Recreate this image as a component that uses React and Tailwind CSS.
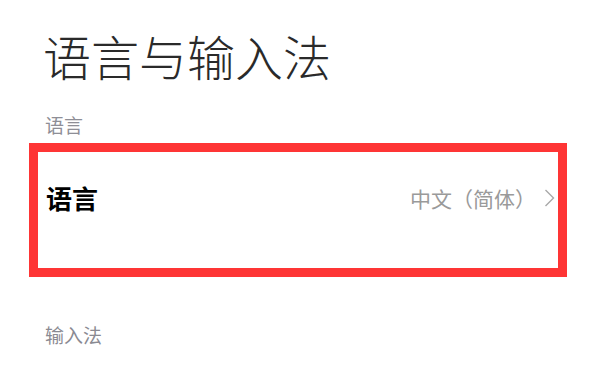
import React from "react";

const App = () => {
  return (
    <div className="w-[600px] h-[392px] bg-white overflow-hidden font-['Noto_Sans_CJK_SC','Noto_Sans',sans-serif]">
      {/* Page title */}
      <h1 className="pl-[43px] pt-[27px] text-[48px] leading-[56px] font-light text-[#2a2a2a]">语言与输入法</h1>

      {/* Language section */}
      <div className="pl-[45px] mt-[30px] text-[19px] leading-[24px] text-[#8e8e96]">语言</div>
      <div className="ml-[29px] mt-[6px] w-[538px] h-[134px] border-[9px] border-[#fe3535] bg-white flex">
        <div className="flex-1 flex items-start pt-[33px] pl-[8px] pr-[3px]">
          <span className="text-[26px] leading-[26px] font-bold text-black">语言</span>
          <div className="ml-auto flex items-center gap-[8px] h-[26px]">
            <span className="text-[21px] leading-[26px] text-[#9a9a9a]">中文（简体）</span>
            <svg width="11" height="18" viewBox="0 0 11 18" fill="none" stroke="#a8a8a8" strokeWidth="1.4">
              <path d="M1.5 1 L9.5 9 L1.5 17" />
            </svg>
          </div>
        </div>
      </div>

      {/* Input method section */}
      <div className="pl-[45px] mt-[46px] text-[19px] leading-[24px] text-[#8a8a92]">输入法</div>
    </div>
  );
};

export default App;
